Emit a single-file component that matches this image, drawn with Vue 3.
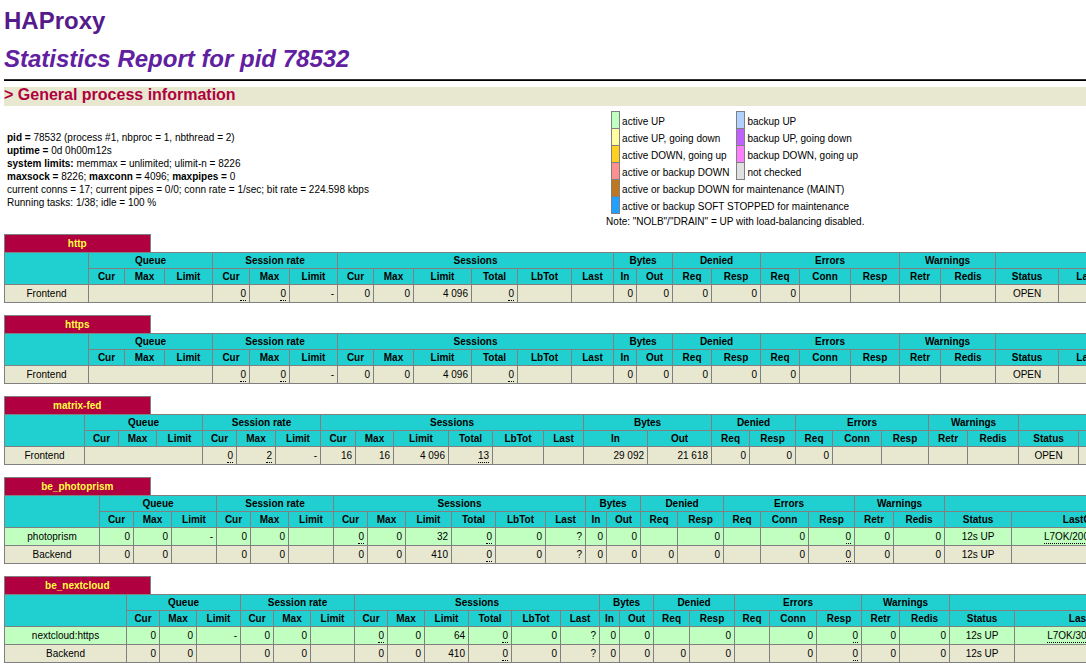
<script setup>
const swatches = [
  [['up', 'active UP'], ['backup-up', 'backup UP']],
  [['going-down', 'active UP, going down'], ['backup-going-down', 'backup UP, going down']],
  [['going-up', 'active DOWN, going up'], ['backup-going-up', 'backup DOWN, going up']],
  [['down', 'active or backup DOWN'], ['unchecked', 'not checked']],
  [['maintain', 'active or backup DOWN for maintenance (MAINT)']],
  [['stopped', 'active or backup SOFT STOPPED for maintenance']],
]

const groups = [
  ['Queue', 3], ['Session rate', 3], ['Sessions', 6], ['Bytes', 2],
  ['Denied', 2], ['Errors', 3], ['Warnings', 2], ['Server', 9],
]

const heads = [
  'Cur', 'Max', 'Limit', 'Cur', 'Max', 'Limit', 'Cur', 'Max', 'Limit', 'Total', 'LbTot', 'Last',
  'In', 'Out', 'Req', 'Resp', 'Req', 'Conn', 'Resp', 'Retr', 'Redis', 'Status', 'LastChk',
  'Wght', 'Act', 'Bck', 'Chk', 'Dwn', 'Dwntme', 'Thrtle',
]

// A leading underscore marks a value that carries a dotted tooltip underline.
const frontendCells = ['_0', '_0', '-', '0', '0', '4 096', '_0', '', '', '0', '0', '0', '0', '0', '', '', '', '', 'OPEN', '']
const frontendCols = [84, 36, 40, 48, 37, 40, 48, 36, 40, 58, 46, 54, 42, 23, 36, 39, 49, 39, 51, 49, 41, 55, 63, 75]

const serverCells = (limit, check) => ['0', '0', '-', '0', '0', '', '_0', '0', limit, '_0', '0', '?', '0', '0', '', '0', '', '0', '_0', '0', '0', '12s UP', check]
const backendCells = ['0', '0', '', '0', '0', '', '0', '0', '410', '_0', '0', '?', '0', '0', '0', '0', '', '0', '_0', '0', '0', '12s UP', '']

const proxies = [
  { name: 'http', cols: frontendCols, rows: [{ kind: 'frontend', name: 'Frontend', cells: frontendCells }] },
  { name: 'https', cols: frontendCols, rows: [{ kind: 'frontend', name: 'Frontend', cells: frontendCells }] },
  {
    name: 'matrix-fed',
    cols: [80, 34, 38, 46, 34, 39, 45, 35, 38, 55, 44, 51, 40, 64, 64, 38, 46, 37, 49, 47, 39, 51, 60, 72],
    rows: [{
      kind: 'frontend', name: 'Frontend',
      cells: ['_0', '_2', '-', '16', '16', '4 096', '_13', '', '', '29 092', '21 618', '0', '0', '0', '', '', '', '', 'OPEN', ''],
    }],
  },
  {
    name: 'be_photoprism',
    cols: [95, 34, 38, 45, 34, 38, 45, 34, 38, 46, 44, 50, 40, 21, 34, 37, 46, 37, 48, 46, 39, 51, 67, 142],
    rows: [
      { kind: 'up', name: 'photoprism', cells: serverCells('32', '_L7OK/200 in 8ms') },
      { kind: 'backend', name: 'Backend', cells: backendCells },
    ],
  },
  {
    name: 'be_nextcloud',
    cols: [122, 33, 37, 44, 33, 37, 44, 33, 37, 44, 43, 49, 39, 20, 34, 36, 45, 35, 47, 45, 38, 50, 65, 148],
    rows: [
      { kind: 'up', name: 'nextcloud:https', cells: serverCells('64', '_L7OK/302 in 44ms') },
      { kind: 'backend', name: 'Backend', cells: backendCells },
    ],
  },
]
</script>

<template>
  <main class="page">
    <h1><a href="#">HAProxy</a></h1>
    <h2>Statistics Report for pid 78532</h2>
    <hr>
    <h3>&gt; General process information</h3>

    <div class="summary">
      <p class="info">
        <b>pid = </b>78532 (process #1, nbproc = 1, nbthread = 2)<br>
        <b>uptime = </b>0d 0h00m12s<br>
        <b>system limits:</b> memmax = unlimited; ulimit-n = 8226<br>
        <b>maxsock = </b>8226; <b>maxconn = </b>4096; <b>maxpipes = </b>0<br>
        current conns = 17; current pipes = 0/0; conn rate = 1/sec; bit rate = 224.598 kbps<br>
        Running tasks: 1/38; idle = 100 %
      </p>
      <div class="legend">
        <table>
          <tbody>
            <tr v-for="(row, i) in swatches" :key="i">
              <template v-for="[kind, label] in row" :key="kind">
                <td class="swatch" :class="kind"></td>
                <td class="label" :colspan="row.length === 1 ? 3 : 1">{{ label }}</td>
              </template>
            </tr>
          </tbody>
        </table>
        <p>Note: "NOLB"/"DRAIN" = UP with load-balancing disabled.</p>
      </div>
    </div>

    <section v-for="proxy in proxies" :key="proxy.name" class="proxy">
      <h4>{{ proxy.name }}</h4>
      <table class="stats">
        <colgroup>
          <col v-for="(w, i) in proxy.cols" :key="i" :style="{ width: w + 'px' }">
          <col span="7">
        </colgroup>
        <thead>
          <tr>
            <th rowspan="2"></th>
            <th v-for="[title, span] in groups" :key="title" :colspan="span">{{ title }}</th>
          </tr>
          <tr>
            <th v-for="(head, i) in heads" :key="i">{{ head }}</th>
          </tr>
        </thead>
        <tbody>
          <tr v-for="row in proxy.rows" :key="row.name" :class="row.kind">
            <td class="center">{{ row.name }}</td>
            <td v-if="row.kind === 'frontend'" colspan="3"></td>
            <td
              v-for="(cell, i) in row.cells"
              :key="i"
              :class="{ center: i >= row.cells.length - 2 }"
            ><u v-if="cell[0] === '_'">{{ cell.slice(1) }}</u><template v-else>{{ cell }}</template></td>
            <td v-for="n in 7" :key="'rest' + n"></td>
          </tr>
        </tbody>
      </table>
    </section>
  </main>
</template>

<style>
body {
  overflow: hidden;
  background: #fff;
}
</style>

<style scoped>
.page {
  padding: 7px 0 0 4px;
  font: 10px/13px "Liberation Sans", Arial, Helvetica, sans-serif;
  color: #000;
}
h1, h2 {
  margin: 0;
  font-size: 24px;
  line-height: 27px;
  font-weight: bold;
}
h1 { margin-bottom: 11px; }
h1 a {
  color: #551a8b;
  text-decoration: none;
}
h2 {
  font-style: italic;
  color: #6020a0;
}
hr {
  height: 0;
  margin: 7px 0 6px;
  border: 0 solid #000;
  border-top: 1px solid #333;
  border-bottom-width: 1px;
}
h3 {
  margin: 0;
  padding-bottom: 3px;
  font-size: 16px;
  line-height: 16px;
  color: #b00040;
  background: #e8e8d0;
}
.summary {
  display: grid;
  grid-template-columns: 5fr 4fr;
  align-items: center;
  padding-top: 5px;
}
.info {
  margin: 0;
  padding: 1px 0 0 3px;
}
.legend { padding-left: 1px; }
.legend p {
  margin: 0;
  padding-top: 1px;
}
.legend table {
  margin-left: 5px;
  border-collapse: collapse;
}
.legend td {
  height: 16px;
  line-height: 12px;
  padding: 4px 2px 0;
  box-sizing: border-box;
}
.legend tr { height: 17px; }
.legend .label {
  padding-right: 7px;
  white-space: nowrap;
}
.legend .swatch {
  width: 8px;
  padding: 0;
  border: 1px solid gray;
}
.up { background: #c0ffc0; }
.going-down { background: #ffffa0; }
.going-up { background: #ffd020; }
.down { background: #ff9090; }
.maintain { background: #c07820; }
.stopped { background: #20a0ff; }
.backup-up { background: #b0d0ff; }
.backup-going-down { background: #c060ff; }
.backup-going-up { background: #ff80ff; }
.unchecked { background: #e0e0e0; }
.frontend, .backend { background: #e8e8d0; }

.proxy {
  width: 1466px;
  margin-bottom: 12px;
}
.summary + .proxy { margin-top: 6px; }
h4 {
  box-sizing: border-box;
  width: 10%;
  margin: 0;
  height: 18px;
  font-size: 10px;
  line-height: 17px;
  text-align: center;
  color: #ffff40;
  background: #b00040;
  border: 1px solid gray;
  border-bottom: 0;
}
.stats {
  width: 100%;
  table-layout: fixed;
  border-collapse: collapse;
}
.stats th, .stats td {
  border: 1px solid gray;
  white-space: nowrap;
}
.stats th {
  height: 13px;
  padding: 1px;
  background: #20d0d0;
  text-align: center;
}
.stats td {
  height: 13px;
  padding: 2px 3px;
  text-align: right;
}
.stats td.center { text-align: center; }
u {
  padding-bottom: 1px;
  text-decoration: none;
  border-bottom: 1px dotted #000;
}
</style>
